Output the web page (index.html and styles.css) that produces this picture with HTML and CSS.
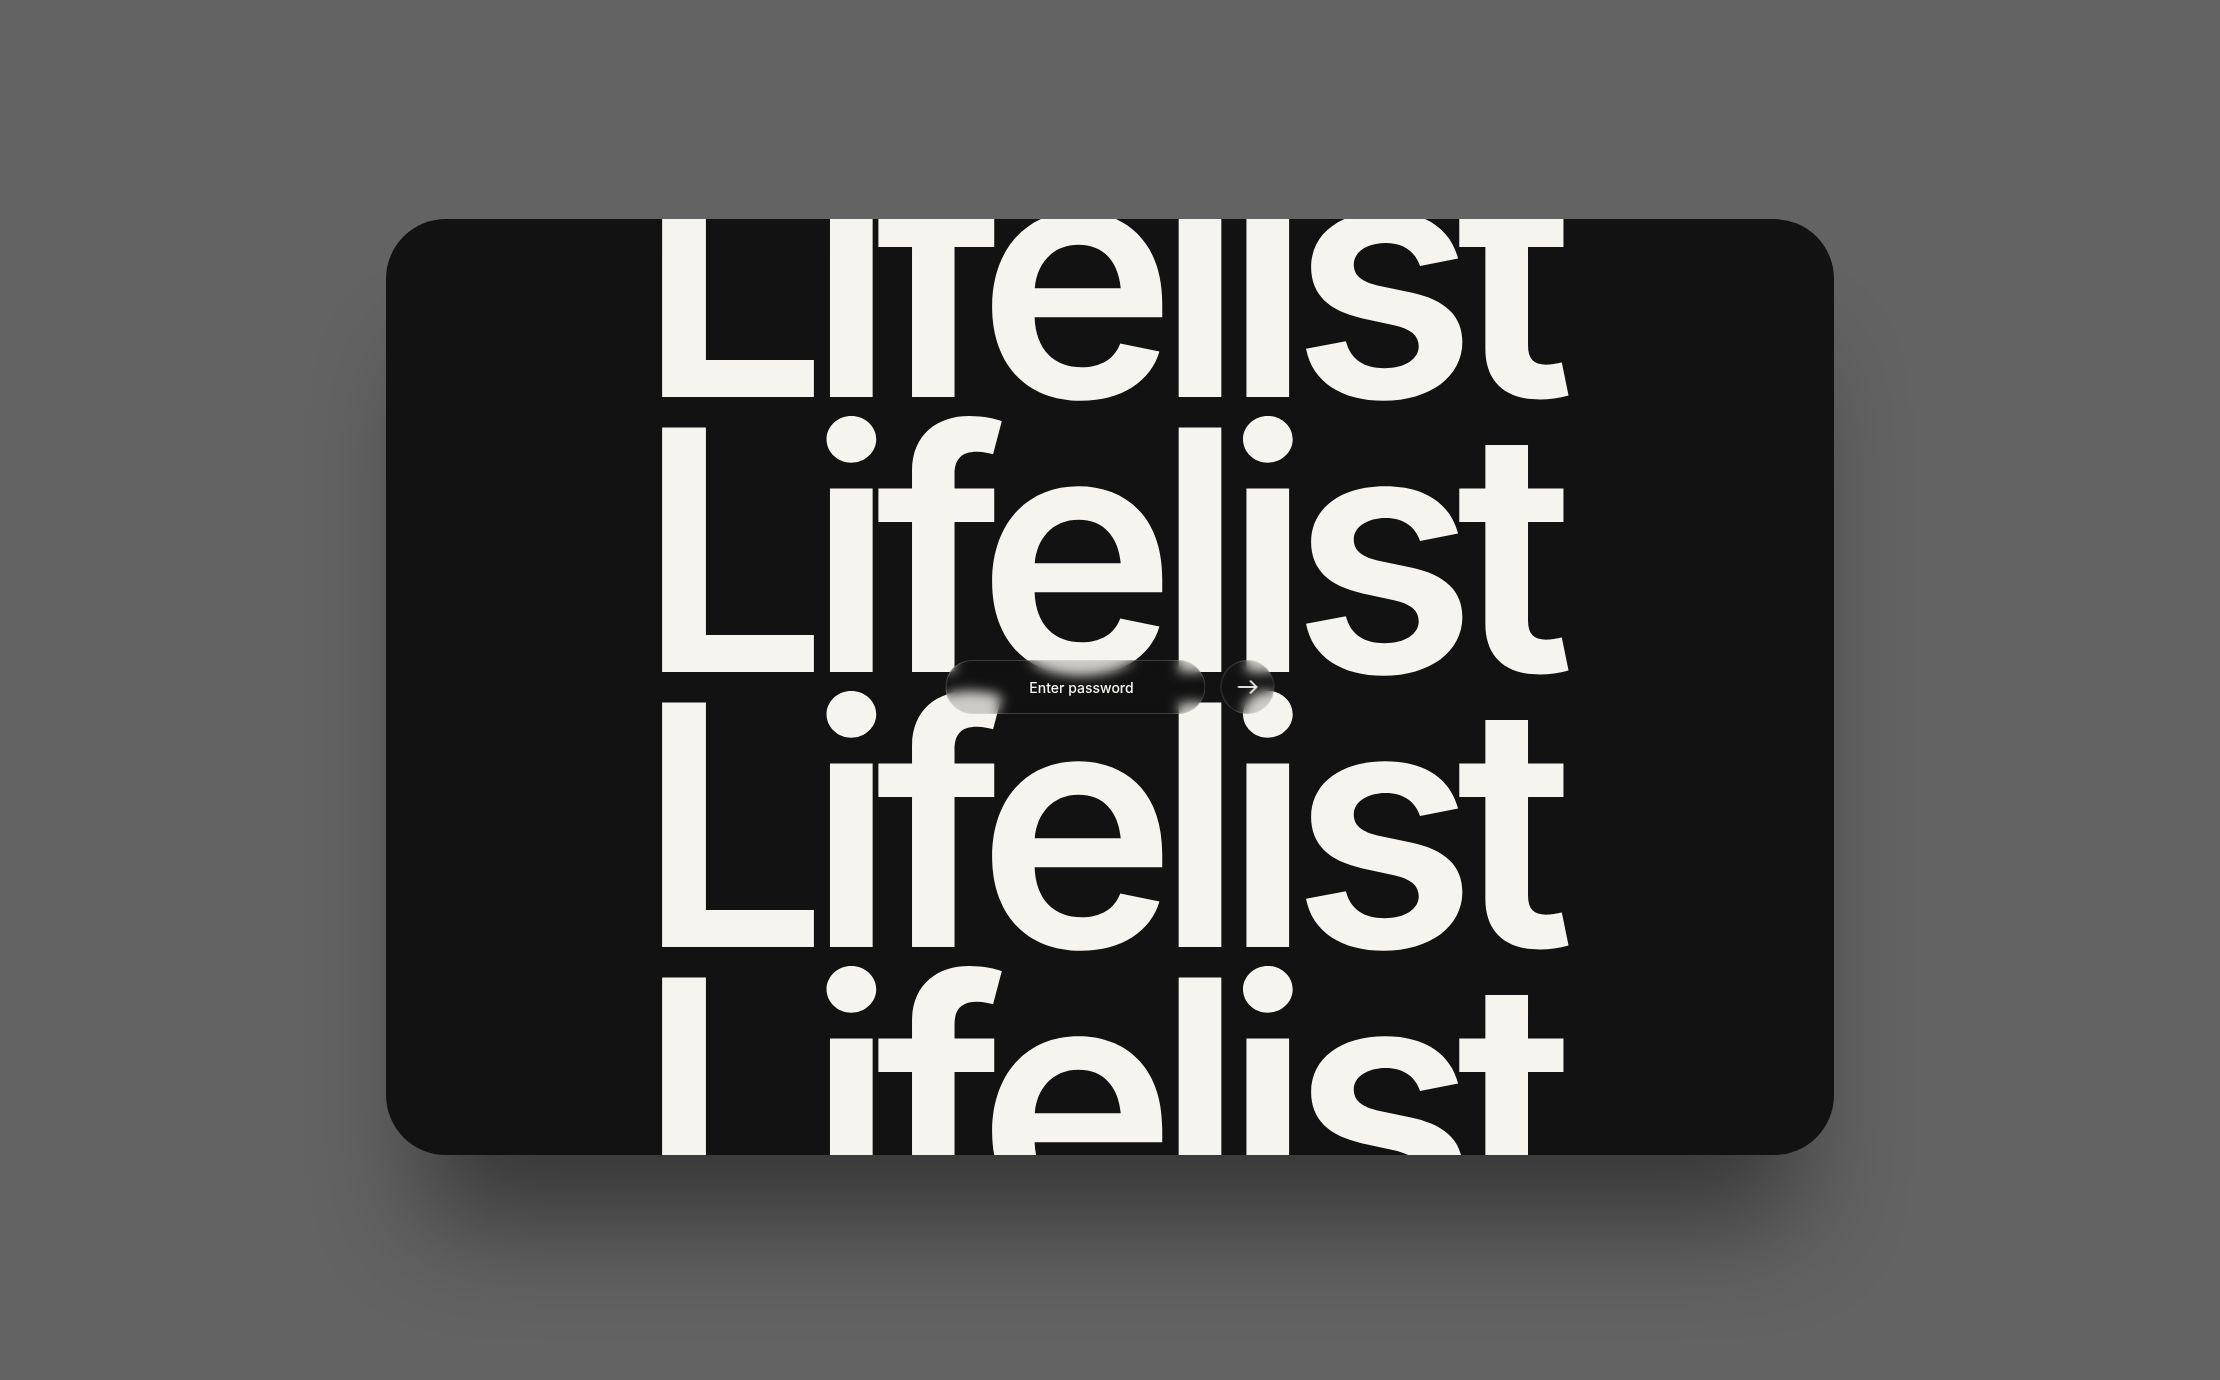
FILE: index.html
```html
<!DOCTYPE html>
<html lang="en">
<head>
<meta charset="UTF-8">
<title>Lifelist</title>
<link rel="stylesheet" href="styles.css">
</head>
<body>
<main class="card">
	<div class="wordmark">
		<div class="wordmark-line">Lifelist</div>
		<div class="wordmark-line">Lifelist</div>
		<div class="wordmark-line">Lifelist</div>
		<div class="wordmark-line">Lifelist</div>
	</div>
	<form class="unlock">
		<div class="glass field">Enter password</div>
		<div class="glass go">
			<svg width="20" height="14" viewBox="0 0 20 14" fill="none" stroke="#f6f4ef" stroke-width="1.8">
				<path d="M0.5 7H19"/>
				<path d="M12.5 0.6L19 7L12.5 13.4"/>
			</svg>
		</div>
	</form>
</main>
</body>
</html>
```

FILE: styles.css
```css
* {
	box-sizing: border-box;
}

body {
	margin: 0;
	height: 100vh;
	padding-bottom: 6px;
	background-color: #636363;
	display: flex;
	align-items: center;
	justify-content: center;
	font-family: Inter, "Liberation Sans", sans-serif;
}

.card {
	position: relative;
	width: 1448px;
	height: 936px;
	border-radius: 60px;
	background-color: #121212;
	box-shadow: 0 105px 110px -40px rgba(0, 0, 0, 0.45);
}

.wordmark {
	height: 100%;
	padding-right: 28px;
	border-radius: 60px;
	overflow: hidden;
	display: flex;
	flex-direction: column;
	align-items: center;
	justify-content: center;
	color: #f6f4ef;
	font-size: 336px;
	font-weight: 600;
	letter-spacing: -0.06em;
	line-height: 275px;
}

.wordmark-line {
	flex-shrink: 0;
	white-space: nowrap;
}

.unlock {
	position: absolute;
	top: 50%;
	left: 50%;
	transform: translate(-50%, -50%);
	display: flex;
	gap: 15px;
	margin: 0;
}

.glass {
	height: 54px;
	border-radius: 27px;
	border: 1px solid rgba(255, 255, 255, 0.18);
	background-color: rgba(18, 18, 18, 0.18);
	backdrop-filter: blur(6px);
	display: flex;
	align-items: center;
	justify-content: center;
	color: #f6f4ef;
	font-size: 14px;
	font-weight: 500;
}

.field {
	width: 260px;
	padding-left: 12px;
}

.go {
	width: 54px;
}
```
